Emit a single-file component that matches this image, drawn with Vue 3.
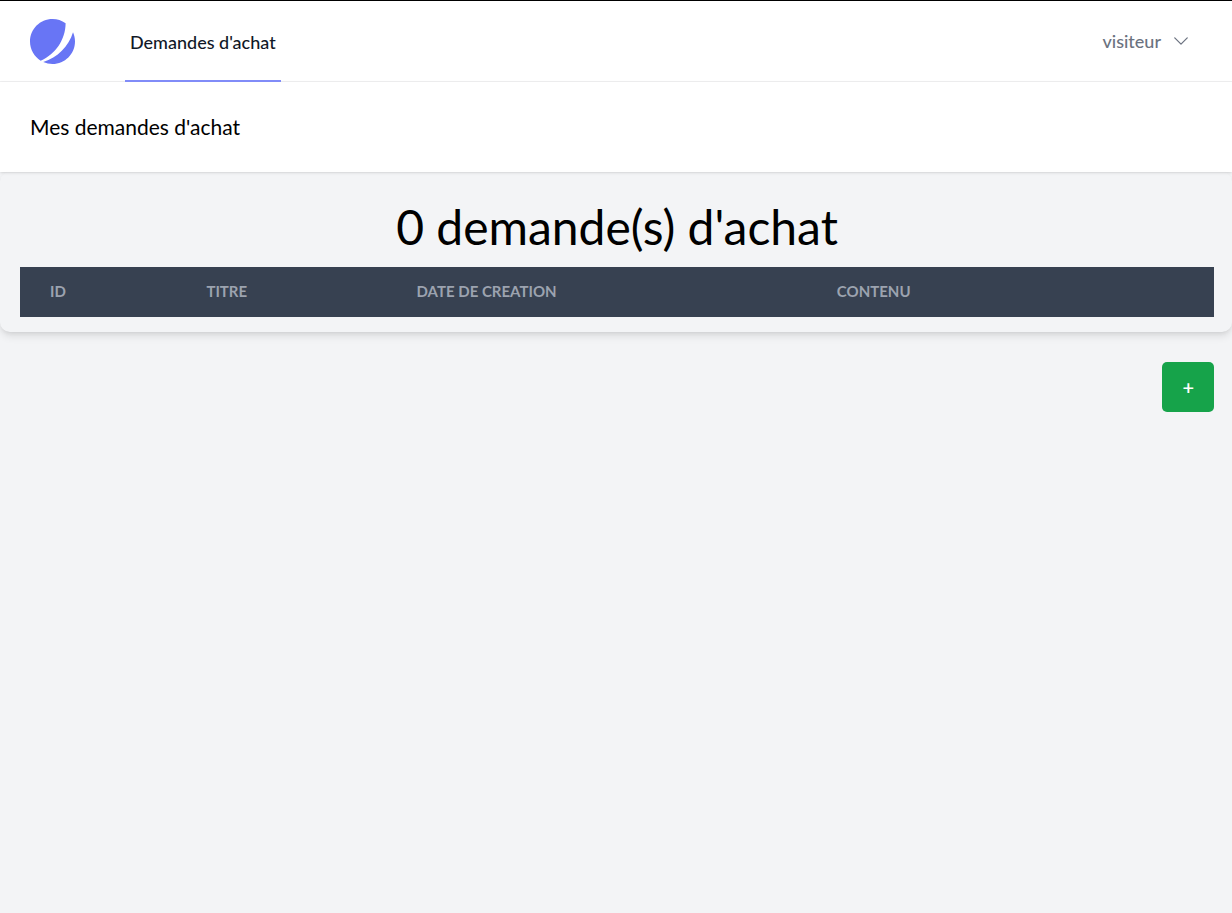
<script setup>
import { ref } from 'vue'

const columns = [
  { key: 'id', label: 'ID' },
  { key: 'titre', label: 'TITRE' },
  { key: 'date', label: 'DATE DE CREATION' },
  { key: 'contenu', label: 'CONTENU' },
]
const demandes = ref([])
</script>

<template>
  <div class="page">
    <nav class="nav">
      <a class="logo" href="#" aria-label="Accueil">
        <svg viewBox="0 0 48 48" fill="none" aria-hidden="true">
          <path d="M11.395 44.428C4.557 40.198 0 32.632 0 24 0 10.745 10.745 0 24 0a23.891 23.891 0 0113.997 4.502c-.2 17.907-11.097 33.245-26.602 39.926z" fill="#6875f5" />
          <path d="M14.134 45.885A23.914 23.914 0 0024 48c13.255 0 24-10.745 24-24 0-3.516-.756-6.856-2.115-9.866-4.659 15.143-16.608 27.092-31.75 31.751z" fill="#6875f5" />
        </svg>
      </a>
      <a class="tab" href="#">Demandes d'achat</a>
      <button class="user" type="button">
        visiteur
        <svg viewBox="0 0 24 24" fill="none" stroke="currentColor" stroke-width="1.5" stroke-linecap="round" stroke-linejoin="round" aria-hidden="true">
          <path d="M19.5 8.25l-7.5 7.5-7.5-7.5" />
        </svg>
      </button>
    </nav>
    <header class="heading">
      <h2>Mes demandes d'achat</h2>
    </header>
    <main>
      <section class="card">
        <h1>{{ demandes.length }} demande(s) d'achat</h1>
        <table>
          <thead>
            <tr>
              <th v-for="c in columns" :key="c.key" :class="c.key" scope="col">{{ c.label }}</th>
            </tr>
          </thead>
          <tbody>
            <tr v-for="d in demandes" :key="d.id">
              <td v-for="c in columns" :key="c.key">{{ d[c.key] }}</td>
            </tr>
          </tbody>
        </table>
      </section>
      <div class="actions">
        <button class="add" type="button">+</button>
      </div>
    </main>
  </div>
</template>

<style>
body {
  margin: 0;
  background: #f3f4f6;
}
</style>

<style scoped>
.page {
  min-height: 100vh;
  box-sizing: border-box;
  border-top: 1px solid #000;
  background: #f3f4f6;
  color: #000;
  font-family: Lato, "Open Sans", sans-serif;
}
.nav {
  display: flex;
  align-items: stretch;
  height: 80px;
  padding: 0 41px 0 30px;
  border-bottom: 1px solid #f0f0f1;
  background: #fff;
}
.logo {
  display: flex;
  align-items: center;
  margin-right: 50px;
}
.logo svg {
  display: block;
  width: 45px;
  height: 45px;
}
.tab {
  display: flex;
  align-items: center;
  box-sizing: border-box;
  padding: 3px 5px 0;
  margin-bottom: -1px;
  border-bottom: 2px solid #818cf8;
  color: #111827;
  font-size: 18px;
  font-weight: 500;
  line-height: 25px;
  text-decoration: none;
}
.user {
  display: flex;
  align-items: center;
  gap: 10px;
  margin-left: auto;
  padding: 0;
  border: 0;
  background: none;
  color: #6b7280;
  font: 500 18px/20px Lato, "Open Sans", sans-serif;
}
.user svg {
  width: 20px;
  height: 20px;
}
.heading {
  padding: 30px;
  background: #fff;
  box-shadow: 0 1px 3px rgba(0, 0, 0, 0.1), 0 1px 2px -1px rgba(0, 0, 0, 0.1);
}
h2 {
  margin: 0;
  font-size: 21px;
  font-weight: 400;
  line-height: 30px;
}
.card {
  padding: 30px 18px 15px 20px;
  border-radius: 10px;
  box-shadow: 0 5px 8px -1px rgba(0, 0, 0, 0.1), 0 2px 5px -2px rgba(0, 0, 0, 0.1);
}
h1 {
  margin: 0 0 15px;
  font-size: 48px;
  font-weight: 400;
  line-height: 50px;
  text-align: center;
}
table {
  width: 100%;
  table-layout: fixed;
  border-collapse: collapse;
}
thead {
  background: #374151;
  color: #9ca3af;
}
th,
td {
  box-sizing: border-box;
  padding: 14px 30px 16px;
  font-size: 15px;
  line-height: 20px;
  text-align: left;
}
th {
  font-weight: 700;
}
.id {
  width: 13.1%;
}
.titre {
  width: 17.6%;
}
.date {
  width: 35.2%;
}
.actions {
  display: flex;
  justify-content: flex-end;
  padding: 30px 18px 0;
}
.add {
  padding: 15px 20px;
  border: 0;
  border-radius: 5px;
  background: #16a34a;
  color: #fff;
  font: 600 20px/20px Lato, "Open Sans", sans-serif;
}
</style>
